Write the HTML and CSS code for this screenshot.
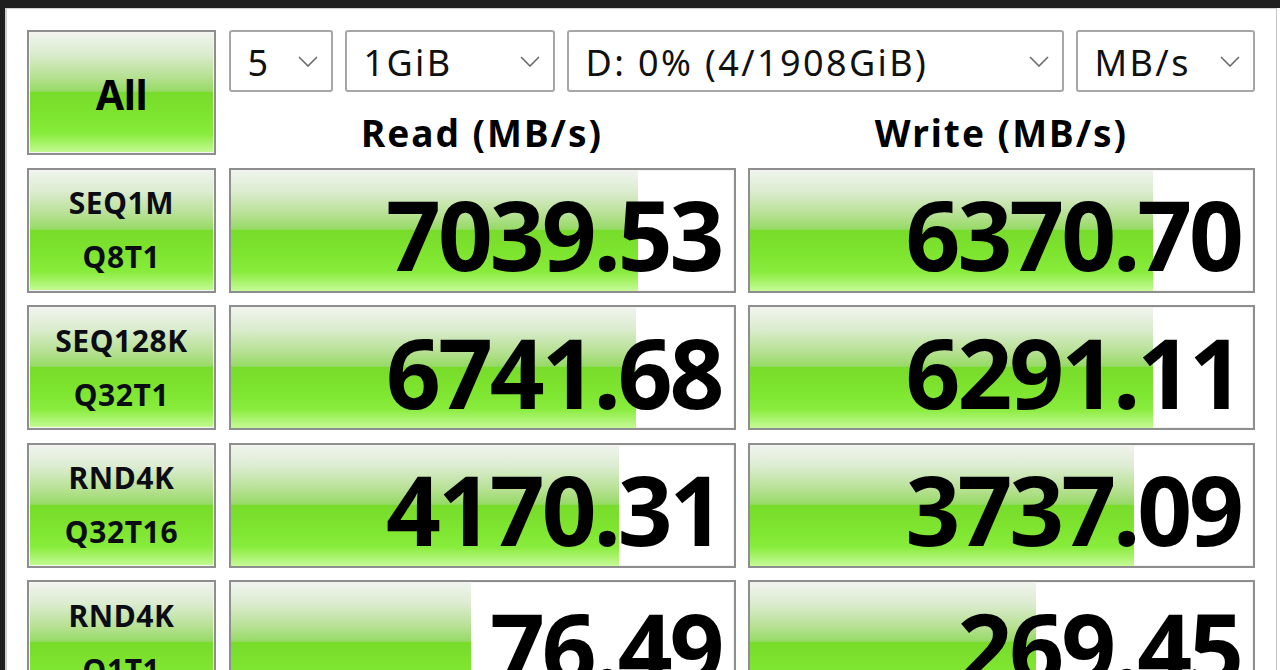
FILE: index.html
```html
<!DOCTYPE html>
<html lang="en">
<head>
<meta charset="utf-8">
<title>CrystalDiskMark</title>
<link rel="stylesheet" href="styles.css">
</head>
<body>
<div class="window">
  <div class="frame">
    <div class="grid">
      <div class="btn btn-all">All</div>
      <div class="top">
        <div class="selects">
          <div class="select s-count"><span>5</span><svg class="chev" viewBox="0 0 20 11"><polyline points="1,1 10,10 19,1"/></svg></div>
          <div class="select s-size"><span>1GiB</span><svg class="chev" viewBox="0 0 20 11"><polyline points="1,1 10,10 19,1"/></svg></div>
          <div class="select s-drive"><span>D: 0% (4/1908GiB)</span><svg class="chev" viewBox="0 0 20 11"><polyline points="1,1 10,10 19,1"/></svg></div>
          <div class="select s-unit"><span>MB/s</span><svg class="chev" viewBox="0 0 20 11"><polyline points="1,1 10,10 19,1"/></svg></div>
        </div>
        <div class="heads">
          <div class="head">Read (MB/s)</div>
          <div class="head">Write (MB/s)</div>
        </div>
      </div>

      <div class="btn btn-test"><span>SEQ1M</span><span>Q8T1</span></div>
      <div class="cell"><div class="bar" style="width:81%"></div><span class="val">7039.53</span></div>
      <div class="cell"><div class="bar" style="width:80.2%"></div><span class="val">6370.70</span></div>

      <div class="btn btn-test"><span>SEQ128K</span><span>Q32T1</span></div>
      <div class="cell"><div class="bar" style="width:80.6%"></div><span class="val">6741.68</span></div>
      <div class="cell"><div class="bar" style="width:80.2%"></div><span class="val">6291.11</span></div>

      <div class="btn btn-test"><span>RND4K</span><span>Q32T16</span></div>
      <div class="cell"><div class="bar" style="width:77.2%"></div><span class="val">4170.31</span></div>
      <div class="cell"><div class="bar" style="width:76.4%"></div><span class="val">3737.09</span></div>

      <div class="btn btn-test"><span>RND4K</span><span>Q1T1</span></div>
      <div class="cell"><div class="bar" style="width:47.8%"></div><span class="val">76.49</span></div>
      <div class="cell"><div class="bar" style="width:56.8%"></div><span class="val">269.45</span></div>
    </div>
  </div>
</div>
</body>
</html>
```

FILE: styles.css
```css
html, body {
  margin: 0;
  padding: 0;
  background: #ffffff;
  overflow: hidden;
}

.window {
  box-sizing: border-box;
  width: 1280px;
  height: 670px;
  border-top: 8px solid #1f1f1f;
  border-left: 5px solid #1f1f1f;
  background: #ffffff;
  overflow: hidden;
}

.frame {
  box-sizing: border-box;
  min-height: 100%;
  margin-right: 3px;
  border-top: 1px solid #cfcfcf;
  border-left: 2px solid #cfcfcf;
  border-right: 1px solid #c4c4c4;
  padding: 21px 0 0 20px;
}

.grid {
  display: grid;
  grid-template-columns: 189px 507px 507px;
  grid-auto-rows: 125px;
  column-gap: 12.5px;
  row-gap: 12.5px;
  font-family: "Noto Sans", "Open Sans", sans-serif;
  color: #000;
}

.btn {
  box-sizing: border-box;
  border: 2px solid #8e8e8e;
  box-shadow: inset 0 0 0 1px #f4f4f4;
  background: linear-gradient(to bottom,
    #f1f4ef 0%,
    #dbeccf 18%,
    #b4e08f 38%,
    #96da66 49%,
    #78dc2a 50%,
    #7ee530 70%,
    #88ec3c 84%,
    #c6fa97 100%);
  display: flex;
  flex-direction: column;
  align-items: center;
  justify-content: center;
  font-weight: 700;
}

.btn-all {
  font-size: 41px;
  letter-spacing: -0.5px;
  padding-top: 2px;
}

.btn-test {
  font-size: 30px;
  line-height: 54px;
  padding-top: 0;
  letter-spacing: 0.6px;
  color: #0c0c14;
}

.top {
  grid-column: 2 / span 2;
  display: flex;
  flex-direction: column;
}

.selects {
  display: flex;
  gap: 12px;
  height: 62px;
}

.select {
  box-sizing: border-box;
  height: 62px;
  border: 2px solid #a7a7a7;
  border-radius: 3px;
  background: #fff;
  display: flex;
  align-items: center;
  justify-content: space-between;
  padding: 0 13px 0 17px;
  font-size: 36px;
  letter-spacing: 2.4px;
  color: #111;
}

.select span {
  padding-top: 2px;
}

.s-count { width: 104px; }
.s-size { width: 210px; }
.s-drive { width: 497px; }
.s-unit { width: 179px; }

.chev {
  flex: none;
  width: 20px;
  height: 11px;
  fill: none;
  stroke: #6b6b6b;
  stroke-width: 1.6;
}

.heads {
  flex: 1;
  display: grid;
  grid-template-columns: 507px 507px;
  column-gap: 12.5px;
  align-items: start;
}

.head {
  text-align: center;
  font-size: 37px;
  font-weight: 700;
  letter-spacing: 2px;
  line-height: 50px;
  padding-top: 16px;
}

.cell {
  position: relative;
  box-sizing: border-box;
  border: 2px solid #8e8e8e;
  box-shadow: inset 0 0 0 1px #f4f4f4;
  background: #fff;
  display: flex;
  align-items: center;
  justify-content: flex-end;
  padding-right: 9px;
}

.bar {
  position: absolute;
  left: 0;
  top: 0;
  bottom: 0;
  background: linear-gradient(to bottom,
    #f1f4ef 0%,
    #dbeccf 18%,
    #b4e08f 38%,
    #96da66 49%,
    #78dc2a 50%,
    #7ee530 70%,
    #88ec3c 84%,
    #c6fa97 100%);
}

.val {
  position: relative;
  font-size: 96px;
  font-weight: 700;
  letter-spacing: -3px;
  padding-right: 3px;
  line-height: 1;
  padding-top: 8px;
}
```
